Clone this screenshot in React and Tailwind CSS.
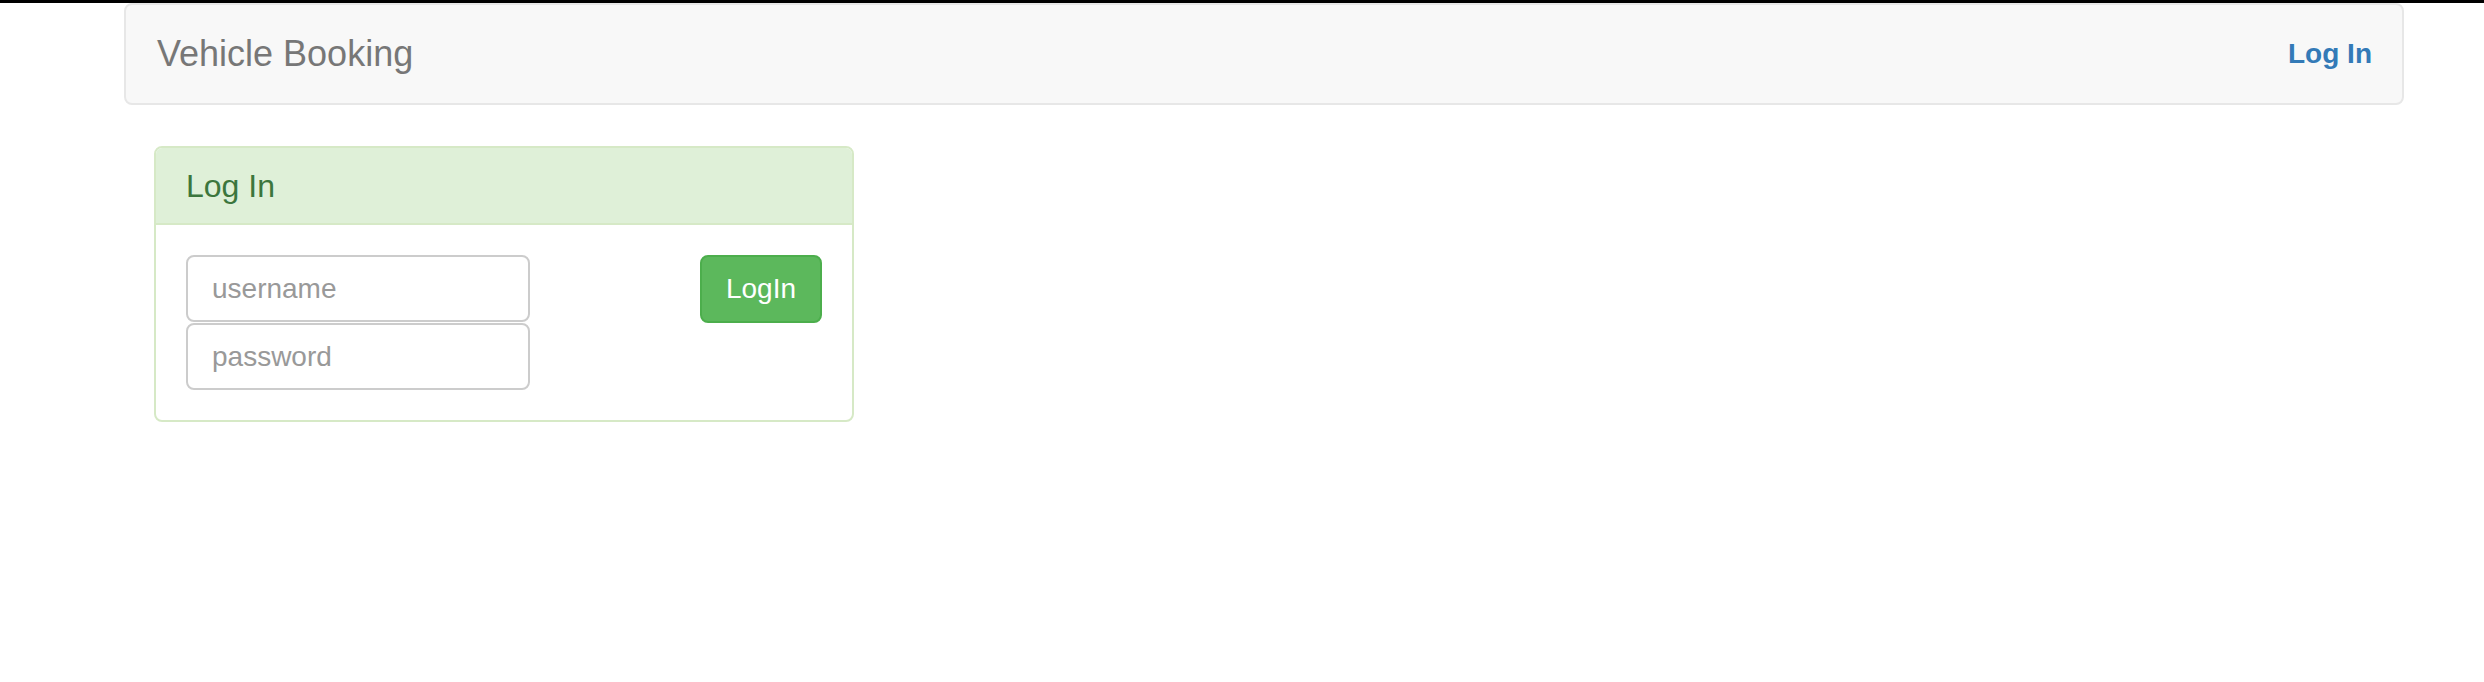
import React from "react";

const App = () => {
  return (
    <div className="min-h-[682px] bg-white font-['Liberation_Sans',Arial,sans-serif]">
      <div className="h-[3px] bg-black" />
      <nav className="ml-[124px] flex h-[102px] w-[2280px] items-center justify-between rounded-[8px] border-2 border-[#e7e7e7] bg-[#f8f8f8] px-[30px]">
        <a href="#" className="text-[36px] leading-[40px] text-[#777777] pl-[1px]">
          Vehicle Booking
        </a>
        <a href="#" className="text-[28px] font-bold leading-[40px] text-[#337ab7]">
          Log In
        </a>
      </nav>

      <div className="ml-[154px] mt-[41px] w-[700px] rounded-[8px] border-2 border-[#d6e9c6] bg-white">
        <div className="rounded-t-[6px] border-b-2 border-[#d6e9c6] bg-[#dff0d8] px-[30px] pt-[21px] pb-[19px]">
          <h3 className="text-[32px] leading-[35px] text-[#3c763d]">Log In</h3>
        </div>
        <div className="flex items-start justify-between p-[30px]">
          <div className="flex flex-col gap-[1px]">
            <input
              type="text"
              placeholder="username"
              className="h-[67px] w-[344px] rounded-[8px] border-2 border-[#cccccc] px-[24px] text-[28px] text-[#555] placeholder:text-[#999999] outline-none"
            />
            <input
              type="password"
              placeholder="password"
              className="h-[67px] w-[344px] rounded-[8px] border-2 border-[#cccccc] px-[24px] text-[28px] text-[#555] placeholder:text-[#999999] outline-none"
            />
          </div>
          <button className="h-[68px] w-[122px] rounded-[8px] border-2 border-[#4cae4c] bg-[#5cb85c] text-[28px] text-white">
            LogIn
          </button>
        </div>
      </div>
    </div>
  );
};

export default App;
